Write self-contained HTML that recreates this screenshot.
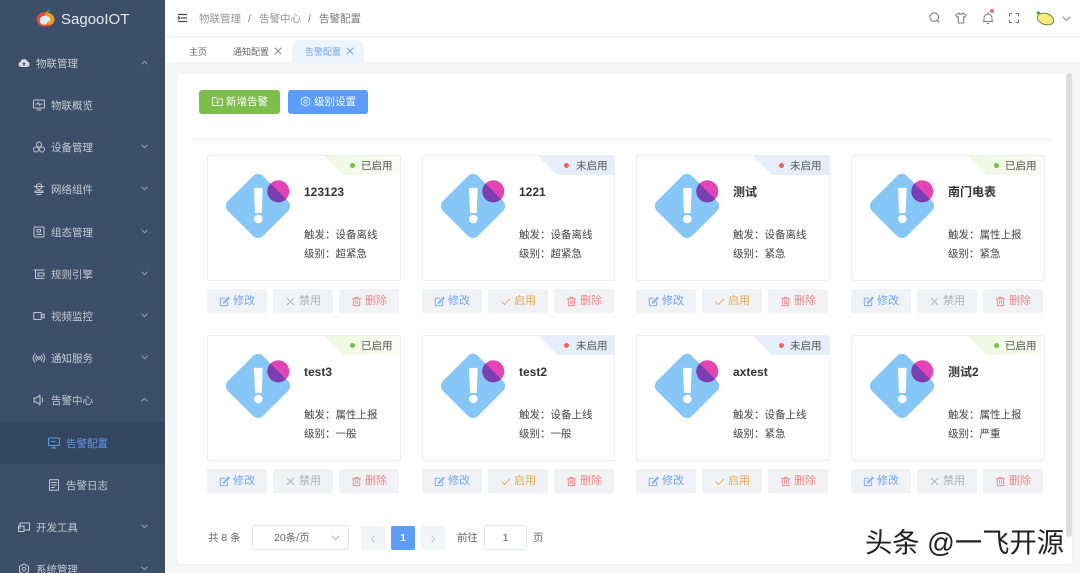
<!DOCTYPE html>
<html lang="zh"><head><meta charset="utf-8"><title>告警配置</title>
<style>
*{box-sizing:border-box}
html,body{margin:0;padding:0;width:1080px;height:573px;overflow:hidden;background:#fff;font-family:"Liberation Sans","Noto Sans CJK SC",sans-serif;font-size:11px;color:#555}
.a{position:absolute}
svg{display:block;overflow:visible}
.i{fill:none;stroke:currentColor;stroke-width:1;stroke-linecap:round;stroke-linejoin:round}
#side{position:absolute;left:0;top:0;width:165px;height:573px;background:#3d4e68;overflow:hidden}
.m{position:absolute;font-size:10.5px;line-height:16px;color:#c3c9d2;white-space:nowrap;margin-top:1px}
.ic{position:absolute;color:#c3c9d2;width:12px;height:12px}
.ch{position:absolute;left:141px;color:#a6afbd;width:7px;height:5px}
.card{position:absolute;width:194px;height:126px;background:#fff;border:1px solid #eceef1;border-radius:2px;overflow:hidden}
.tag{position:absolute;right:0;top:0;width:76px;height:19px;clip-path:polygon(0 0,100% 0,100% 100%,19px 100%)}
.tag.on{background:linear-gradient(90deg,#eef9e0,#f9fcf4)}
.tag.off{background:#e6eefb}
.dot{position:absolute;right:45px;top:7px;width:5px;height:5px;border-radius:50%}
.st{position:absolute;left:153px;top:2px;margin-top:1px;font-size:10.5px;line-height:15px;color:#555;white-space:nowrap}
.dia{position:absolute;left:17px;top:17px}
.nm{position:absolute;left:96px;top:28px;font-size:12px;line-height:16px;font-weight:bold;color:#333;white-space:nowrap}
.ln{position:absolute;left:96px;font-size:10.5px;line-height:15px;color:#444;white-space:nowrap}
.b{position:absolute;width:60px;height:24px;background:#f0f2f5;border-radius:2px;font-size:11px;line-height:24px;white-space:nowrap}
.b svg{position:absolute;left:12px;top:6.500px;width:11px;height:11px}
.b span{position:absolute;left:26px;top:0}
.e{color:#6ea6f5}.d{color:#aeb0b4}.s{color:#e6a94f}.r{color:#ee8a8a}
</style></head><body>
<svg width="0" height="0" style="position:absolute">
<defs>
<symbol id="dm" viewBox="0 0 74 68"><rect x="8.250" y="8.250" width="49.500" height="49.500" rx="7" transform="rotate(45 33 33)" fill="#87c7f7"/><path d="M29 15.500a.6.600 0 0 1 .6-.6h7.500a.6.600 0 0 1 .6.600L36.700 39.500a.6.600 0 0 1-.6.500h-5.500a.6.600 0 0 1-.6-.5Z" fill="#fff"/><circle cx="33.300" cy="46" r="4.300" fill="#fff"/><circle cx="53.300" cy="18.300" r="11" fill="#e346b4"/><path d="M45.500 10.500 61.100 26.100A11 11 0 0 1 45.500 10.500Z" fill="#7c3fb3"/></symbol>
<symbol id="ed" viewBox="0 0 12 12"><path class="i" d="M9.500 6.500v3.500a.6.600 0 0 1-.6.600H2a.6.600 0 0 1-.6-.6V3a.6.600 0 0 1 .6-.6h4M10.300 1.300 5.200 6.500l-.4 1.300 1.300-.4 5-5.200Z"/></symbol>
<symbol id="xx" viewBox="0 0 12 12"><path class="i" d="M2.500 2.500l7 7M9.500 2.500l-7 7"/></symbol>
<symbol id="ck" viewBox="0 0 12 12"><path class="i" d="M2 6.500l2.800 2.800L10.500 3.500"/></symbol>
<symbol id="tr" viewBox="0 0 12 12"><path class="i" d="M1.500 3h9M4.500 3V1.500h3V3M2.500 3v7.500h7V3M5 5v3.500M7 5v3.500"/></symbol>
<symbol id="cd" viewBox="0 0 9 6"><path class="i" d="M1 1l3.500 3.500L8 1"/></symbol>
<symbol id="cu" viewBox="0 0 9 6"><path class="i" d="M1 5 4.500 1.500 8 5"/></symbol>
</defs></svg>

<div id="side">
<svg class="a" style="left:36px;top:9px" width="19" height="18" viewBox="0 0 20 19"><ellipse cx="10" cy="11" rx="9.500" ry="7.800" fill="#e5492f"/><path d="M10 4C15 3 19.500 7 19.500 11c0 2-1 4-3 5.500H9Z" fill="#ef9a2a"/><path d="M4 11c1-3 3-4 6-4 3 .5 4.500 2 5 4 .5 2-1.500 2.500-3 2.500l-1.500 3H6.500C4.500 15.500 3.500 13 4 11Z" fill="#d9ecf9"/><path d="M10 3.500C11 1.500 13 .8 15 1c-.6 2-2.500 3-5 2.500Z" fill="#3e9c56"/></svg>
<div class="a" style="left:61px;top:10px;font-size:15px;line-height:20px;color:#e6e9ee;white-space:nowrap">SagooIOT</div>

<svg class="ic" style="left:18px;top:57px" viewBox="0 0 12 12"><path d="M3 10a2.600 2.600 0 0 1-.5-5.100A3.600 3.600 0 0 1 9.400 4.500 2.800 2.800 0 0 1 9 10Z" fill="#d7dbe2"/><path d="M6 9V6M4.700 7.200 6 5.900l1.300 1.300" stroke="#3d4e68" fill="none"/></svg>
<div class="m" style="left:36px;top:55px">物联管理</div>
<svg class="ch" style="top:60px"><use href="#cu"/></svg>

<svg class="ic" style="left:33px;top:99px" viewBox="0 0 12 12"><g class="i"><rect x=".5" y="1" width="11" height="8" rx="1"/><path d="M4 11h4M2.800 5h1.500l1-1.500 1.300 3 1-1.500h1.500"/></g></svg>
<div class="m" style="left:51px;top:97px">物联概览</div>

<svg class="ic" style="left:33px;top:141px" viewBox="0 0 12 12"><g class="i"><circle cx="6" cy="3.500" r="2.500"/><circle cx="3" cy="8.500" r="2.500"/><circle cx="9" cy="8.500" r="2.500"/></g></svg>
<div class="m" style="left:51px;top:139px">设备管理</div>
<svg class="ch" style="top:144px"><use href="#cd"/></svg>

<svg class="ic" style="left:33px;top:183px" viewBox="0 0 12 12"><g class="i"><circle cx="6" cy="3.500" r="2.800"/><path d="M1 3.500h10M2 8h8v1.500H2zM6 6.500V8M4 11.500h4"/></g></svg>
<div class="m" style="left:51px;top:181px">网络组件</div>
<svg class="ch" style="top:186px"><use href="#cd"/></svg>

<svg class="ic" style="left:33px;top:226px" viewBox="0 0 12 12"><g class="i"><rect x="1" y="1" width="10" height="10" rx="1"/><path d="M4 3.500h3.500v2.500H4zM4 8.500h4.500"/></g></svg>
<div class="m" style="left:51px;top:224px">组态管理</div>
<svg class="ch" style="top:229px"><use href="#cd"/></svg>

<svg class="ic" style="left:33px;top:268px" viewBox="0 0 12 12"><g class="i"><path d="M1 2h10M2.500 2v8.500H11M5 5h6v3H5z"/></g></svg>
<div class="m" style="left:51px;top:266px">规则引擎</div>
<svg class="ch" style="top:271px"><use href="#cd"/></svg>

<svg class="ic" style="left:33px;top:310px" viewBox="0 0 12 12"><g class="i"><rect x=".8" y="2.500" width="7.500" height="7" rx=".5"/><path d="M8.300 5.500 11.200 4v4L8.300 6.800"/></g></svg>
<div class="m" style="left:51px;top:308px">视频监控</div>
<svg class="ch" style="top:313px"><use href="#cd"/></svg>

<svg class="ic" style="left:33px;top:352px" viewBox="0 0 12 12"><g class="i"><circle cx="6" cy="6" r="1.300"/><path d="M3.800 3.500a3.500 3.500 0 0 0 0 5M8.200 3.500a3.500 3.500 0 0 1 0 5M2 1.800a6 6 0 0 0 0 8.400M10 1.800a6 6 0 0 1 0 8.400"/></g></svg>
<div class="m" style="left:51px;top:350px">通知服务</div>
<svg class="ch" style="top:355px"><use href="#cd"/></svg>

<svg class="ic" style="left:33px;top:394px" viewBox="0 0 12 12"><g class="i"><path d="M1 4h2.500L7 1.200v9.600L3.500 8H1zM9 4a3 3 0 0 1 0 4"/></g></svg>
<div class="m" style="left:51px;top:392px">告警中心</div>
<svg class="ch" style="top:397px"><use href="#cu"/></svg>

<div class="a" style="left:0;top:422px;width:165px;height:42px;background:#344660"></div>
<svg class="ic" style="left:48px;top:437px;color:#5b97e6" viewBox="0 0 12 12"><g class="i"><rect x=".5" y="1" width="11" height="7.500" rx=".8"/><path d="M4 11h4M6 8.500V11M3 4.500h4"/></g></svg>
<div class="m" style="left:66px;top:435px;color:#5b97e6">告警配置</div>

<svg class="ic" style="left:48px;top:479px" viewBox="0 0 12 12"><g class="i"><rect x="1.500" y=".8" width="9" height="10.400"/><path d="M3.500 3.500h5M3.500 6h5M3.500 8.500h3"/></g></svg>
<div class="m" style="left:66px;top:477px">告警日志</div>

<svg class="ic" style="left:18px;top:521px" viewBox="0 0 12 12"><g class="i"><path d="M2 8V2h9.500v7H7"/><rect x=".5" y="5" width="5.500" height="5.500"/></g></svg>
<div class="m" style="left:36px;top:519px">开发工具</div>
<svg class="ch" style="top:524px"><use href="#cd"/></svg>

<svg class="ic" style="left:18px;top:563px" viewBox="0 0 12 12"><g class="i"><path d="M6 .8 10.500 3.400v5.200L6 11.200 1.500 8.600V3.400Z"/><circle cx="6" cy="6" r="1.800"/></g></svg>
<div class="m" style="left:36px;top:561px">系统管理</div>
<svg class="ch" style="top:566px"><use href="#cd"/></svg>
</div>

<!-- top bar -->
<svg class="a" style="left:177px;top:13px" width="11" height="10" viewBox="0 0 11 10"><path d="M1 1.500h9M4 5h6M1 8.500h9M1 3.500 2.800 5 1 6.500" fill="none" stroke="#444" stroke-width="1.300"/></svg>
<div class="a" style="left:199px;top:11px;font-size:10.500px;line-height:16px;color:#959595;white-space:nowrap">物联管理</div>
<div class="a" style="left:248px;top:11px;font-size:10.500px;line-height:16px;color:#777">/</div>
<div class="a" style="left:259px;top:11px;font-size:10.500px;line-height:16px;color:#959595;white-space:nowrap">告警中心</div>
<div class="a" style="left:308px;top:11px;font-size:10.500px;line-height:16px;color:#777">/</div>
<div class="a" style="left:319px;top:11px;font-size:10.500px;line-height:16px;color:#777;white-space:nowrap">告警配置</div>

<svg class="a" style="left:929px;top:12px;color:#777" width="11" height="11" viewBox="0 0 11 11"><g class="i"><circle cx="5.200" cy="5.200" r="4.300"/><path d="M8.500 8.500l1.700 1.700"/></g></svg>
<svg class="a" style="left:955px;top:12px;color:#777" width="12" height="12" viewBox="0 0 12 12"><g class="i"><path d="M4 1 .8 3l1.200 2.200 1.300-.6V11h5.400V4.600l1.300.6L11.200 3 8 1c-.3 1.600-3.700 1.600-4 0Z"/></g></svg>
<svg class="a" style="left:982px;top:12px;color:#777" width="12" height="12" viewBox="0 0 12 12"><g class="i"><path d="M2 9.500V6a4 4 0 0 1 8 0v3.500M1 9.500h10M5 11.500h2M6 1V.5"/></g></svg>
<div class="a" style="left:990px;top:9px;width:4px;height:4px;border-radius:50%;background:#e87070"></div>
<svg class="a" style="left:1009px;top:13px;color:#777" width="10" height="10" viewBox="0 0 10 10"><g class="i"><path d="M.5 3V.5H3M7 .5h2.500V3M9.500 7v2.500H7M3 9.500H.5V7"/></g></svg>
<svg class="a" style="left:1035px;top:10px" width="20" height="16" viewBox="0 0 20 16"><ellipse cx="10.500" cy="9" rx="8.500" ry="5.500" transform="rotate(18 10.500 9)" fill="#f4ec76" stroke="#55553a" stroke-width=".7"/><path d="M1 2.500 4 1l2 3-3 1Z" fill="#5f9a63"/></svg>
<svg class="a" style="left:1062px;top:16px;color:#888" width="9" height="6"><use href="#cd"/></svg>

<!-- tabs -->
<div class="a" style="left:165px;top:36px;width:915px;height:1px;background:#f0f0f0"></div>
<div class="a" style="left:189px;top:45px;font-size:9px;line-height:14px;color:#666">主页</div>
<div class="a" style="left:233px;top:45px;font-size:9px;line-height:14px;color:#666;white-space:nowrap">通知配置</div>
<svg class="a" style="left:274px;top:47px;color:#888" width="8" height="8" viewBox="0 0 8 8"><path class="i" d="M1 1l6 6M7 1 1 7"/></svg>
<div class="a" style="left:292px;top:40px;width:72px;height:23px;background:#ecf4fe;border-radius:6px 6px 0 0"></div>
<div class="a" style="left:305px;top:45px;font-size:9px;line-height:14px;color:#6ea6f5;white-space:nowrap">告警配置</div>
<svg class="a" style="left:346px;top:47px;color:#6ea6f5" width="8" height="8" viewBox="0 0 8 8"><path class="i" d="M1 1l6 6M7 1 1 7"/></svg>

<!-- main bg -->
<div class="a" style="left:165px;top:62px;width:915px;height:511px;background:#f6f6f7"></div>
<div class="a" style="left:292px;top:60px;width:72px;height:3px;background:#ecf4fe"></div>
<div class="a" style="left:177px;top:74px;width:895px;height:490px;background:#fff;border-radius:4px;box-shadow:0 0 2px #e8e8e8"></div>
<div class="a" style="left:1066px;top:73px;width:6px;height:464px;background:#dcdde0;border-radius:3px"></div>

<div class="a" style="left:199px;top:90px;width:81px;height:24px;background:#7cbd4b;border-radius:3px"></div>
<svg class="a" style="left:212px;top:96px;color:#e4f2d8" width="11" height="11" viewBox="0 0 11 11"><g class="i"><path d="M.5 1.500h3.500l1 1.500h5.500v6.500H.5ZM5.500 4.700v3M4 6.200h3"/></g></svg>
<div class="a" style="left:226px;top:94px;font-size:10.500px;line-height:16px;color:#fff;white-space:nowrap">新增告警</div>
<div class="a" style="left:288px;top:90px;width:80px;height:24px;background:#5b9df9;border-radius:3px"></div>
<svg class="a" style="left:300px;top:96px;color:#dceaff" width="11" height="11" viewBox="0 0 11 11"><g class="i"><path d="M5.500.8 9.700 3.200v4.600L5.500 10.200 1.300 7.800V3.200Z"/><circle cx="5.500" cy="5.500" r="1.700"/></g></svg>
<div class="a" style="left:314px;top:94px;font-size:10.500px;line-height:16px;color:#fff;white-space:nowrap">级别设置</div>
<div class="a" style="left:192px;top:139px;width:859px;height:1px;background:#eeeeee"></div>

<!-- row 1 -->
<div class="card" style="left:207px;top:155px"><div class="tag on"></div><div class="dot" style="background:#74c142"></div><div class="st">已启用</div><svg class="dia" width="74" height="68"><use href="#dm"/></svg><div class="nm">123123</div><div class="ln" style="top:72px">触发：设备离线</div><div class="ln" style="top:91px">级别：超紧急</div></div>
<div class="b e" style="left:207px;top:289px"><svg><use href="#ed"/></svg><span>修改</span></div>
<div class="b d" style="left:273px;top:289px"><svg><use href="#xx"/></svg><span>禁用</span></div>
<div class="b r" style="left:339px;top:289px"><svg><use href="#tr"/></svg><span>删除</span></div>

<div class="card" style="left:422px;top:155px;width:193px"><div class="tag off"></div><div class="dot" style="background:#f0605c"></div><div class="st">未启用</div><svg class="dia" width="74" height="68"><use href="#dm"/></svg><div class="nm">1221</div><div class="ln" style="top:72px">触发：设备离线</div><div class="ln" style="top:91px">级别：超紧急</div></div>
<div class="b e" style="left:422px;top:289px"><svg><use href="#ed"/></svg><span>修改</span></div>
<div class="b s" style="left:488px;top:289px"><svg><use href="#ck"/></svg><span>启用</span></div>
<div class="b r" style="left:554px;top:289px"><svg><use href="#tr"/></svg><span>删除</span></div>

<div class="card" style="left:636px;top:155px"><div class="tag off"></div><div class="dot" style="background:#f0605c"></div><div class="st">未启用</div><svg class="dia" width="74" height="68"><use href="#dm"/></svg><div class="nm">测试</div><div class="ln" style="top:72px">触发：设备离线</div><div class="ln" style="top:91px">级别：紧急</div></div>
<div class="b e" style="left:636px;top:289px"><svg><use href="#ed"/></svg><span>修改</span></div>
<div class="b s" style="left:702px;top:289px"><svg><use href="#ck"/></svg><span>启用</span></div>
<div class="b r" style="left:768px;top:289px"><svg><use href="#tr"/></svg><span>删除</span></div>

<div class="card" style="left:851px;top:155px"><div class="tag on"></div><div class="dot" style="background:#74c142"></div><div class="st">已启用</div><svg class="dia" width="74" height="68"><use href="#dm"/></svg><div class="nm">南门电表</div><div class="ln" style="top:72px">触发：属性上报</div><div class="ln" style="top:91px">级别：紧急</div></div>
<div class="b e" style="left:851px;top:289px"><svg><use href="#ed"/></svg><span>修改</span></div>
<div class="b d" style="left:917px;top:289px"><svg><use href="#xx"/></svg><span>禁用</span></div>
<div class="b r" style="left:983px;top:289px"><svg><use href="#tr"/></svg><span>删除</span></div>

<!-- row 2 -->
<div class="card" style="left:207px;top:335px"><div class="tag on"></div><div class="dot" style="background:#74c142"></div><div class="st">已启用</div><svg class="dia" width="74" height="68"><use href="#dm"/></svg><div class="nm">test3</div><div class="ln" style="top:72px">触发：属性上报</div><div class="ln" style="top:91px">级别：一般</div></div>
<div class="b e" style="left:207px;top:469px"><svg><use href="#ed"/></svg><span>修改</span></div>
<div class="b d" style="left:273px;top:469px"><svg><use href="#xx"/></svg><span>禁用</span></div>
<div class="b r" style="left:339px;top:469px"><svg><use href="#tr"/></svg><span>删除</span></div>

<div class="card" style="left:422px;top:335px;width:193px"><div class="tag off"></div><div class="dot" style="background:#f0605c"></div><div class="st">未启用</div><svg class="dia" width="74" height="68"><use href="#dm"/></svg><div class="nm">test2</div><div class="ln" style="top:72px">触发：设备上线</div><div class="ln" style="top:91px">级别：一般</div></div>
<div class="b e" style="left:422px;top:469px"><svg><use href="#ed"/></svg><span>修改</span></div>
<div class="b s" style="left:488px;top:469px"><svg><use href="#ck"/></svg><span>启用</span></div>
<div class="b r" style="left:554px;top:469px"><svg><use href="#tr"/></svg><span>删除</span></div>

<div class="card" style="left:636px;top:335px"><div class="tag off"></div><div class="dot" style="background:#f0605c"></div><div class="st">未启用</div><svg class="dia" width="74" height="68"><use href="#dm"/></svg><div class="nm">axtest</div><div class="ln" style="top:72px">触发：设备上线</div><div class="ln" style="top:91px">级别：紧急</div></div>
<div class="b e" style="left:636px;top:469px"><svg><use href="#ed"/></svg><span>修改</span></div>
<div class="b s" style="left:702px;top:469px"><svg><use href="#ck"/></svg><span>启用</span></div>
<div class="b r" style="left:768px;top:469px"><svg><use href="#tr"/></svg><span>删除</span></div>

<div class="card" style="left:851px;top:335px"><div class="tag on"></div><div class="dot" style="background:#74c142"></div><div class="st">已启用</div><svg class="dia" width="74" height="68"><use href="#dm"/></svg><div class="nm">测试2</div><div class="ln" style="top:72px">触发：属性上报</div><div class="ln" style="top:91px">级别：严重</div></div>
<div class="b e" style="left:851px;top:469px"><svg><use href="#ed"/></svg><span>修改</span></div>
<div class="b d" style="left:917px;top:469px"><svg><use href="#xx"/></svg><span>禁用</span></div>
<div class="b r" style="left:983px;top:469px"><svg><use href="#tr"/></svg><span>删除</span></div>

<!-- pagination -->
<div class="a" style="left:208px;top:531px;font-size:10.500px;line-height:15px;color:#666;white-space:nowrap">共 8 条</div>
<div class="a" style="left:252px;top:525px;width:97px;height:25px;border:1px solid #e4e7ed;border-radius:3px;background:#fff"></div>
<div class="a" style="left:274px;top:531px;font-size:10.500px;line-height:15px;color:#666;white-space:nowrap">20条/页</div>
<svg class="a" style="left:331px;top:535px;color:#b5b8be" width="9" height="6"><use href="#cd"/></svg>
<div class="a" style="left:361px;top:526px;width:24px;height:24px;background:#f4f5f9;border-radius:2px"></div>
<svg class="a" style="left:370px;top:535px;color:#bbbfc6" width="5" height="8" viewBox="0 0 6 9"><path class="i" d="M5 .8 1.500 4.500 5 8.200"/></svg>
<div class="a" style="left:391px;top:526px;width:24px;height:24px;background:#5b9df9;border-radius:2px;color:#fff;font-size:10.500px;font-weight:bold;line-height:24px;text-align:center">1</div>
<div class="a" style="left:421px;top:526px;width:24px;height:24px;background:#f4f5f9;border-radius:2px"></div>
<svg class="a" style="left:431px;top:535px;color:#bbbfc6" width="5" height="8" viewBox="0 0 6 9"><path class="i" d="M1 .8 4.500 4.500 1 8.200"/></svg>
<div class="a" style="left:457px;top:531px;font-size:10.500px;line-height:15px;color:#666;white-space:nowrap">前往</div>
<div class="a" style="left:484px;top:525px;width:43px;height:25px;border:1px solid #e4e7ed;border-radius:3px;background:#fff;font-size:10.500px;line-height:24px;text-align:center;color:#666">1</div>
<div class="a" style="left:533px;top:531px;font-size:10.500px;line-height:15px;color:#666">页</div>

<!-- watermark -->
<div class="a" style="left:865px;top:524px;font-size:27.300px;line-height:38px;color:#222;white-space:nowrap;text-shadow:1px 0 0 #fff">头条 @一飞开源</div>
</body></html>
